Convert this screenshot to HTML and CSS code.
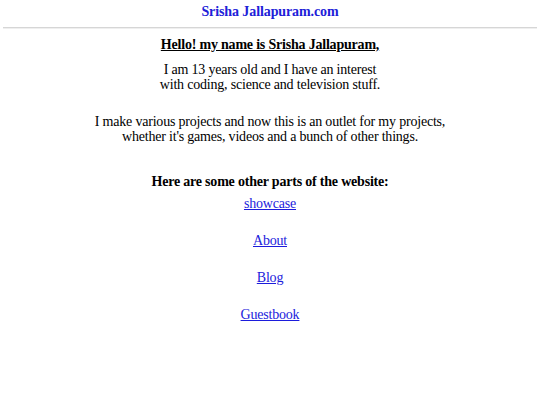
FILE: index.html
```html
<!DOCTYPE html>
<html>
<head>
<meta charset="utf-8">
<link rel="stylesheet" href="styles.css">
</head>
<body>
<header class="top">
  <div class="site-title">Srisha Jallapuram.com</div>
</header>
<hr class="rule">
<main class="content">
  <h2 class="hello">Hello! my name is Srisha Jallapuram,</h2>
  <p class="para first">I am 13 years old and I have an interest<br>with coding, science and television stuff.</p>
  <p class="para second">I make various projects and now this is an outlet for my projects,<br>whether it's games, videos and a bunch of other things.</p>
  <h2 class="parts">Here are some other parts of the website:</h2>
  <p class="link-row"><a href="#">showcase</a></p>
  <p class="link-row"><a href="#">About</a></p>
  <p class="link-row"><a href="#">Blog</a></p>
  <p class="link-row"><a href="#">Guestbook</a></p>
</main>
</body>
</html>
```
FILE: styles.css
```css
html, body {
  margin: 0;
  padding: 0;
  background: #ffffff;
}
body {
  font-family: "Liberation Serif", "Times New Roman", serif;
  color: #000;
  padding: 0 3px;
  text-align: center;
  font-size: 14px;
  line-height: 15px;
  letter-spacing: -0.2px;
}
.top {
  padding-top: 4px;
}
.site-title {
  font-family: "Liberation Serif", "Times New Roman", serif;
  color: #2020d8;
  font-weight: bold;
  font-size: 14px;
  line-height: 15px;
  letter-spacing: -0.1px;
}
.rule {
  margin: 8px 0 0 0;
  border: none;
  border-top: 1px solid #d6d6d6;
  border-bottom: 1px solid #efefef;
  height: 0;
}
.content {
  padding-top: 8px;
}
.hello {
  font-size: 14px;
  line-height: 15px;
  font-weight: bold;
  text-decoration: underline;
  margin: 0;
}
.para {
  font-size: 14px;
  line-height: 15px;
  margin: 0;
}
.first {
  margin-top: 10px;
}
.second {
  margin-top: 22px;
}
.parts {
  font-size: 14px;
  line-height: 15px;
  font-weight: bold;
  margin: 30px 0 0 0;
}
.link-row {
  font-size: 14px;
  line-height: 15px;
  margin: 7px 0 22px 0;
}
.link-row + .link-row {
  margin-top: 0;
}
.link-row a {
  color: #1c1cdc;
}
```
